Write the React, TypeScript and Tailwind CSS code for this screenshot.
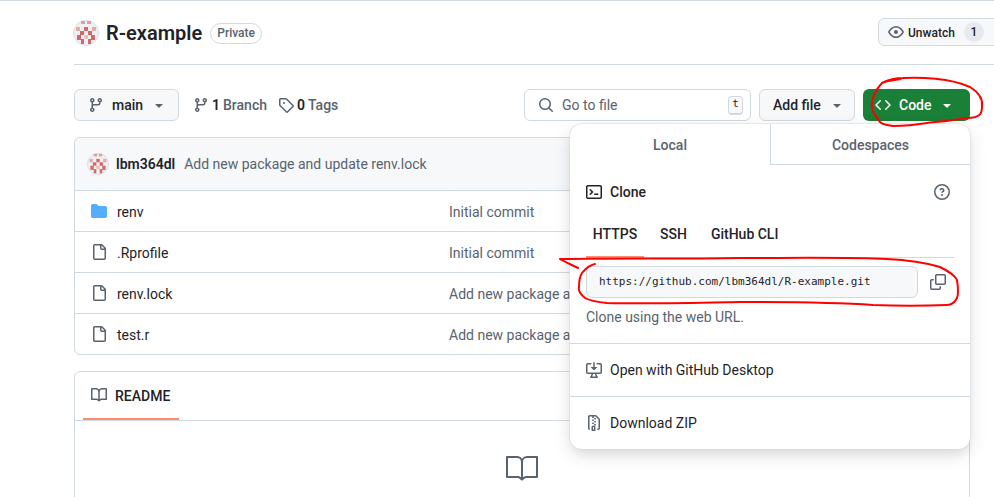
import React from 'react';
import { GoBook } from 'react-icons/go';

// 16px octicon paths
const icons: Record<string, string> = {
  book: 'M0 1.75A.75.75 0 0 1 .75 1h4.253c1.227 0 2.317.59 3 1.501A3.743 3.743 0 0 1 11.006 1h4.245a.75.75 0 0 1 .75.75v10.5a.75.75 0 0 1-.75.75h-4.507a2.25 2.25 0 0 0-1.591.659l-.622.621a.75.75 0 0 1-1.06 0l-.622-.621A2.25 2.25 0 0 0 5.258 13H.75a.75.75 0 0 1-.75-.75Zm7.251 10.324.004-5.073-.002-2.253A2.25 2.25 0 0 0 5.003 2.5H1.5v9h3.757a3.75 3.75 0 0 1 1.994.574ZM8.755 4.75l-.004 7.322a3.752 3.752 0 0 1 1.992-.572H14.5v-9h-3.495a2.25 2.25 0 0 0-2.25 2.25Z',
  code: 'm11.28 3.22 4.25 4.25a.75.75 0 0 1 0 1.06l-4.25 4.25a.749.749 0 0 1-1.275-.326.749.749 0 0 1 .215-.734L13.94 8l-3.72-3.72a.749.749 0 0 1 .326-1.275.749.749 0 0 1 .734.215Zm-6.56 0a.751.751 0 0 1 1.042.018.751.751 0 0 1 .018 1.042L2.06 8l3.72 3.72a.749.749 0 0 1-.326 1.275.749.749 0 0 1-.734-.215L.47 8.53a.75.75 0 0 1 0-1.06Z',
  copy: 'M0 6.75C0 5.784.784 5 1.75 5h1.5a.75.75 0 0 1 0 1.5h-1.5a.25.25 0 0 0-.25.25v7.5c0 .138.112.25.25.25h7.5a.25.25 0 0 0 .25-.25v-1.5a.75.75 0 0 1 1.5 0v1.5A1.75 1.75 0 0 1 9.25 16h-7.5A1.75 1.75 0 0 1 0 14.25ZM5 1.75C5 .784 5.784 0 6.75 0h7.5C15.216 0 16 .784 16 1.75v7.5A1.75 1.75 0 0 1 14.25 11h-7.5A1.75 1.75 0 0 1 5 9.25Zm1.75-.25a.25.25 0 0 0-.25.25v7.5c0 .138.112.25.25.25h7.5a.25.25 0 0 0 .25-.25v-7.5a.25.25 0 0 0-.25-.25Z',
  desktop: 'm4.927 5.427 2.896 2.896a.25.25 0 0 0 .354 0l2.896-2.896A.25.25 0 0 0 10.896 5H8.75V.75a.75.75 0 1 0-1.5 0V5H5.104a.25.25 0 0 0-.177.427ZM1.573 2.573a.25.25 0 0 0-.073.177v7.5a.25.25 0 0 0 .25.25h12.5a.25.25 0 0 0 .25-.25v-7.5a.25.25 0 0 0-.25-.25h-3a.75.75 0 0 1 0-1.5h3A1.75 1.75 0 0 1 16 2.75v7.5A1.75 1.75 0 0 1 14.25 12h-3.727c.099 1.041.52 1.872 1.292 2.757A.75.75 0 0 1 11.25 16h-6.5a.75.75 0 0 1-.565-1.243c.772-.885 1.192-1.716 1.292-2.757H1.75A1.75 1.75 0 0 1 0 10.25v-7.5A1.75 1.75 0 0 1 1.75 1h3a.75.75 0 0 1 0 1.5h-3a.25.25 0 0 0-.177.073ZM6.982 12a5.72 5.72 0 0 1-.765 2.5h3.566a5.72 5.72 0 0 1-.765-2.5H6.982Z',
  eye: 'M8 2c1.981 0 3.671.992 4.933 2.078 1.27 1.091 2.187 2.345 2.637 3.023a1.62 1.62 0 0 1 0 1.798c-.45.678-1.367 1.932-2.637 3.023C11.67 13.008 9.981 14 8 14c-1.981 0-3.671-.992-4.933-2.078C1.797 10.83.88 9.576.43 8.898a1.62 1.62 0 0 1 0-1.798c.45-.677 1.367-1.931 2.637-3.022C4.33 2.992 6.019 2 8 2ZM1.679 7.932a.12.12 0 0 0 0 .136c.411.622 1.241 1.75 2.366 2.717C5.176 11.758 6.527 12.5 8 12.5c1.473 0 2.825-.742 3.955-1.715 1.124-.967 1.954-2.096 2.366-2.717a.12.12 0 0 0 0-.136c-.412-.621-1.242-1.75-2.366-2.717C10.824 4.242 9.473 3.5 8 3.5c-1.473 0-2.825.742-3.955 1.715-1.124.967-1.954 2.096-2.366 2.717ZM8 10a2 2 0 1 1-.001-3.999A2 2 0 0 1 8 10Z',
  file: 'M2 1.75C2 .784 2.784 0 3.75 0h6.586c.464 0 .909.184 1.237.513l2.914 2.914c.329.328.513.773.513 1.237v9.586A1.75 1.75 0 0 1 13.25 16h-9.5A1.75 1.75 0 0 1 2 14.25Zm1.75-.25a.25.25 0 0 0-.25.25v12.5c0 .138.112.25.25.25h9.5a.25.25 0 0 0 .25-.25V6h-2.75A1.75 1.75 0 0 1 9 4.25V1.5Zm6.75.062V4.25c0 .138.112.25.25.25h2.688l-.011-.013-2.914-2.914-.013-.011Z',
  folder: 'M1.75 1A1.75 1.75 0 0 0 0 2.75v10.5C0 14.216.784 15 1.75 15h12.5A1.75 1.75 0 0 0 16 13.25v-8.5A1.75 1.75 0 0 0 14.25 3H7.5a.25.25 0 0 1-.2-.1l-.9-1.2C6.07 1.26 5.55 1 5 1H1.75Z',
  branch: 'M9.5 3.25a2.25 2.25 0 1 1 3 2.122V6A2.5 2.5 0 0 1 10 8.5H6a1 1 0 0 0-1 1v1.128a2.251 2.251 0 1 1-1.5 0V5.372a2.25 2.25 0 1 1 1.5 0v1.836A2.493 2.493 0 0 1 6 7h4a1 1 0 0 0 1-1v-.628A2.25 2.25 0 0 1 9.5 3.25Zm-6 0a.75.75 0 1 0 1.5 0 .75.75 0 0 0-1.5 0Zm8.25-.75a.75.75 0 1 0 0 1.5.75.75 0 0 0 0-1.5ZM4.25 12a.75.75 0 1 0 0 1.5.75.75 0 0 0 0-1.5Z',
  question: 'M0 8a8 8 0 1 1 16 0A8 8 0 0 1 0 8Zm8-6.5a6.5 6.5 0 1 0 0 13 6.5 6.5 0 0 0 0-13ZM6.92 6.085h.001a.749.749 0 1 1-1.342-.67c.169-.339.436-.701.849-.977C6.845 4.16 7.369 4 8 4a2.756 2.756 0 0 1 1.637.525c.503.377.863.965.863 1.725 0 .448-.115.83-.329 1.15-.205.307-.47.513-.692.662-.109.072-.22.138-.313.195l-.006.004a6.24 6.24 0 0 0-.26.16.952.952 0 0 0-.276.245.75.75 0 0 1-1.248-.832c.184-.264.42-.489.692-.661.103-.067.207-.132.313-.195l.007-.004c.1-.061.182-.11.258-.161a.969.969 0 0 0 .277-.245C8.96 6.514 9 6.427 9 6.25a.612.612 0 0 0-.262-.525A1.27 1.27 0 0 0 8 5.5c-.369 0-.595.09-.74.187a1.01 1.01 0 0 0-.34.398ZM9 11a1 1 0 1 1-2 0 1 1 0 0 1 2 0Z',
  search: 'M10.68 11.74a6 6 0 0 1-7.922-8.982 6 6 0 0 1 8.982 7.922l3.04 3.04a.749.749 0 0 1-.326 1.275.749.749 0 0 1-.734-.215ZM11.5 7a4.499 4.499 0 1 0-8.997 0A4.499 4.499 0 0 0 11.5 7Z',
  tag: 'M1 7.775V2.75C1 1.784 1.784 1 2.75 1h5.025c.464 0 .91.184 1.238.513l6.25 6.25a1.75 1.75 0 0 1 0 2.474l-5.026 5.026a1.75 1.75 0 0 1-2.474 0l-6.25-6.25A1.752 1.752 0 0 1 1 7.775Zm1.5 0c0 .066.026.13.073.177l6.25 6.25a.25.25 0 0 0 .354 0l5.025-5.025a.25.25 0 0 0 0-.354l-6.25-6.25a.25.25 0 0 0-.177-.073H2.75a.25.25 0 0 0-.25.25ZM6 5a1 1 0 1 1 0 2 1 1 0 0 1 0-2Z',
  terminal: 'M0 2.75C0 1.784.784 1 1.75 1h12.5c.966 0 1.75.784 1.75 1.75v10.5A1.75 1.75 0 0 1 14.25 15H1.75A1.75 1.75 0 0 1 0 13.25Zm1.75-.25a.25.25 0 0 0-.25.25v10.5c0 .138.112.25.25.25h12.5a.25.25 0 0 0 .25-.25V2.75a.25.25 0 0 0-.25-.25ZM7.25 8a.749.749 0 0 1-.22.53l-2.25 2.25a.749.749 0 0 1-1.275-.326.749.749 0 0 1 .215-.734L5.44 8 3.72 6.28a.749.749 0 0 1 .326-1.275.749.749 0 0 1 .734.215l2.25 2.25c.141.14.22.331.22.53Zm1.5 1.5h3a.75.75 0 0 1 0 1.5h-3a.75.75 0 0 1 0-1.5Z',
  caret: 'm4.427 7.427 3.396 3.396a.25.25 0 0 0 .354 0l3.396-3.396A.25.25 0 0 0 11.396 7H4.604a.25.25 0 0 0-.177.427Z',
  zip: 'M3.5 1.75v11.5c0 .09.048.173.126.217a.75.75 0 0 1-.752 1.298A1.748 1.748 0 0 1 2 13.25V1.75C2 .784 2.784 0 3.75 0h5.586c.464 0 .909.185 1.237.513l2.914 2.914c.329.328.513.773.513 1.237v8.586A1.75 1.75 0 0 1 12.25 15h-.5a.75.75 0 0 1 0-1.5h.5a.25.25 0 0 0 .25-.25V4.664a.25.25 0 0 0-.073-.177L9.513 1.573a.25.25 0 0 0-.177-.073H7.25a.75.75 0 0 1 0 1.5h-.5a.75.75 0 0 1 0-1.5h-3a.25.25 0 0 0-.25.25Zm3.75 8.75h.5c.966 0 1.75.784 1.75 1.75v3a.75.75 0 0 1-.75.75h-2.5a.75.75 0 0 1-.75-.75v-3c0-.966.784-1.75 1.75-1.75ZM6 5.25a.75.75 0 0 1 .75-.75h.5a.75.75 0 0 1 0 1.5h-.5A.75.75 0 0 1 6 5.25Zm.75 2.25h.5a.75.75 0 0 1 0 1.5h-.5a.75.75 0 0 1 0-1.5ZM8 6.75A.75.75 0 0 1 8.75 6h.5a.75.75 0 0 1 0 1.5h-.5A.75.75 0 0 1 8 6.75ZM8.75 3h.5a.75.75 0 0 1 0 1.5h-.5a.75.75 0 0 1 0-1.5ZM8 9.75A.75.75 0 0 1 8.75 9h.5a.75.75 0 0 1 0 1.5h-.5A.75.75 0 0 1 8 9.75Zm-1 2.5v2.25h1v-2.25a.25.25 0 0 0-.25-.25h-.5a.25.25 0 0 0-.25.25Z',
};

function Octicon({ name, size = 16, className }: { name: string; size?: number; className?: string }) {
  return (
    <svg width={size} height={size} viewBox="0 0 16 16" fill="currentColor" className={'shrink-0 ' + (className ?? '')}>
      <path d={icons[name]} />
    </svg>
  );
}

const files = [
  { name: 'renv', commit: 'Initial commit', icon: 'folder' },
  { name: '.Rprofile', commit: 'Initial commit', icon: 'file' },
  { name: 'renv.lock', commit: 'Add new package and update renv.lock', icon: 'file' },
  { name: 'test.r', commit: 'Add new package and update renv.lock', icon: 'file' },
];

function Avatar({ size }: { size: number }) {
  return (
    <svg width={size} height={size} viewBox="0 0 26 26" className="shrink-0">
      <circle cx="13" cy="13" r="12.5" fill="#f0f0f0" stroke="#d8dee4" strokeWidth="1" />
      <g fill="#cf6a6a">
        <rect x="3" y="7" width="4" height="4" opacity="0.5" />
        <rect x="19" y="7" width="4" height="4" opacity="0.5" />
        <rect x="8" y="1" width="4" height="3" opacity="0.6" />
        <rect x="14" y="1" width="4" height="3" opacity="0.6" />
        <rect x="11" y="7" width="4" height="4" />
        <rect x="7" y="11" width="4" height="4" />
        <rect x="15" y="11" width="4" height="4" />
        <rect x="4" y="15" width="4" height="5" />
        <rect x="18" y="15" width="4" height="5" />
        <rect x="8" y="19" width="3" height="5" />
        <rect x="15" y="19" width="3" height="5" />
        <rect x="11" y="15" width="4" height="4" opacity="0.35" />
      </g>
    </svg>
  );
}

export default function App() {
  return (
    <div
      className="relative w-[994px] h-[497px] overflow-hidden bg-white border-t border-[#d1d9e0] text-[#1f2328] text-[14px]"
      style={{ fontFamily: 'Roboto, "Noto Sans", sans-serif' }}
    >
      {/* Repo title */}
      <div className="ml-[74px] w-[960px] h-[64px] border-b border-[#d1d9e0] flex items-start justify-between pt-[17px] pr-[16px]">
        <div className="flex items-center h-[28px] mt-px -ml-px">
          <Avatar size={26} />
          <span className="ml-[7px] text-[20px] font-semibold leading-none">R-example</span>
          <span className="ml-[8px] h-[21px] px-[6px] flex items-center rounded-full border border-[#d1d9e0] text-[12px] font-medium text-[#59636e]">
            Private
          </span>
        </div>
        <div className="h-[28px] w-[140px] flex items-center pl-[9px] rounded-md border border-[#d1d9e0] bg-[#f6f8fa] text-[12px] font-medium">
          <Octicon name="eye" className="text-[#59636e]" />
          <span className="ml-[4px] pt-px">Unwatch</span>
          <span className="ml-[9px] w-[20px] h-[20px] rounded-full bg-[#e6eaef] flex items-center justify-center">1</span>
        </div>
      </div>

      {/* Toolbar */}
      <div className="ml-[74px] w-[896px] mt-[24px] h-[32px] flex items-center">
        <div className="w-[105px] h-[32px] flex items-center pl-[13px] rounded-md border border-[#d1d9e0] bg-[#f6f8fa] font-medium">
          <Octicon name="branch" className="text-[#59636e]" />
          <span className="ml-[8px]">main</span>
          <Octicon name="caret" className="ml-[8px] text-[#59636e]" />
        </div>
        <div className="ml-[14px] flex items-center">
          <Octicon name="branch" className="text-[#59636e]" />
          <span className="ml-[3px] font-semibold">1</span>
          <span className="ml-[3px] text-[#59636e] font-medium">Branch</span>
        </div>
        <div className="ml-[11px] flex items-center">
          <Octicon name="tag" className="text-[#59636e]" />
          <span className="ml-[3px] font-semibold">0</span>
          <span className="ml-[3px] text-[#59636e] font-medium">Tags</span>
        </div>
        <div className="ml-auto w-[227px] h-[32px] flex items-center pl-[13px] pr-[7px] rounded-md border border-[#d1d9e0] text-[#59636e]">
          <Octicon name="search" />
          <span className="ml-[8px]">Go to file</span>
          <span
            className="ml-auto w-[15px] h-[19px] flex items-center justify-center rounded-[4px] border border-[#d1d9e0] border-b-2 bg-[#f6f8fa] text-[11px] text-[#1f2328]"
            style={{ fontFamily: '"DejaVu Sans Mono", monospace' }}
          >
            t
          </span>
        </div>
        <div className="ml-[8px] w-[96px] h-[32px] flex items-center pl-[13px] rounded-md border border-[#d1d9e0] bg-[#f6f8fa] font-medium">
          <span>Add file</span>
          <Octicon name="caret" className="ml-[8px] text-[#59636e]" />
        </div>
        <div className="ml-[8px] w-[107px] h-[32px] flex items-center pl-[12px] rounded-md bg-[#1a7f37] text-white font-medium">
          <Octicon name="code" />
          <span className="ml-[8px]">Code</span>
          <Octicon name="caret" className="ml-[8px]" />
        </div>
      </div>

      {/* File table */}
      <div className="ml-[74px] w-[896px] mt-[16px] rounded-md border border-[#d1d9e0]">
        <div className="h-[52px] flex items-center pl-[12px] bg-[#f6f8fa] rounded-t-md">
          <Avatar size={22} />
          <span className="ml-[7px] pt-px font-semibold">lbm364dl</span>
          <span className="ml-[9px] pt-px text-[#59636e]">Add new package and update renv.lock</span>
        </div>
        {files.map((file) => (
          <div key={file.name} className="h-[41px] flex items-center border-t border-[#d1d9e0] pl-[16px]">
            <Octicon name={file.icon} className={file.icon === 'folder' ? 'text-[#54aeff]' : 'text-[#59636e]'} />
            <span className="ml-[10px] w-[332px] pt-[2px]">{file.name}</span>
            <span className="text-[#59636e] whitespace-nowrap pt-[2px]">{file.commit}</span>
          </div>
        ))}
      </div>

      {/* README */}
      <div className="ml-[74px] w-[896px] mt-[16px] h-[200px] rounded-md border border-[#d1d9e0]">
        <div className="h-[49px] border-b border-[#d1d9e0] pl-[8px] flex">
          <div className="w-[96px] h-[48px] flex items-center pl-[8px] border-b-2 border-[#fd8c73] font-medium">
            <Octicon name="book" className="text-[#59636e]" />
            <span className="ml-[8px] pt-[2px]">README</span>
          </div>
        </div>
        <div className="flex justify-center pt-[31px]">
          <GoBook size={32} className="text-[#59636e]" />
        </div>
      </div>

      {/* Code dropdown */}
      <div className="absolute left-[570px] top-[123px] w-[400px] h-[325px] rounded-xl bg-white shadow-[0_0_0_1px_#d1d9e080,0_6px_12px_-3px_#25292e18,0_6px_18px_#25292e1f]">
        <div className="flex h-[41px] font-medium text-[#59636e]">
          <div className="w-[200px] flex items-center justify-center pt-[2px]">Local</div>
          <div className="w-[200px] flex items-center justify-center pt-[2px] border-l border-b border-[#d1d9e0]">Codespaces</div>
        </div>
        <div className="px-[16px]">
          <div className="flex items-center h-[16px] mt-[19px]">
            <Octicon name="terminal" />
            <span className="ml-[8px] font-medium">Clone</span>
            <Octicon name="question" className="ml-auto mr-[4px] text-[#59636e]" />
          </div>
          <div className="mt-[11px] h-[47px] w-[368px] border-b border-[#d1d9e0] flex font-medium">
            <div className="w-[58px] h-[47px] pt-px border-b-2 border-[#fd8c73] flex items-center justify-center">HTTPS</div>
            <div className="ml-[16px] pt-px flex items-center">SSH</div>
            <div className="ml-[24px] pt-px flex items-center">GitHub CLI</div>
          </div>
          <div className="mt-[8px] flex items-center">
            <div
              className="w-[332px] h-[32px] pl-[12px] flex items-center rounded-md border border-[#d1d9e0] bg-[#f6f8fa] text-[11px]"
              style={{ fontFamily: '"DejaVu Sans Mono", monospace' }}
            >
              https://github.com/lbm364dl/R-example.git
            </div>
            <Octicon name="copy" className="ml-[12px] text-[#59636e]" />
          </div>
          <div className="mt-[9px] h-[20px] leading-[20px] text-[#59636e]">Clone using the web URL.</div>
        </div>
        <div className="mt-[16px] h-[53px] border-t border-[#d1d9e0] flex items-center pl-[16px]">
          <Octicon name="desktop" className="text-[#59636e]" />
          <span className="ml-[8px]">Open with GitHub Desktop</span>
        </div>
        <div className="h-[53px] border-t border-[#d1d9e0] flex items-center pl-[16px]">
          <Octicon name="zip" className="text-[#59636e]" />
          <span className="ml-[8px]">Download ZIP</span>
        </div>
      </div>

      {/* Red pen marks */}
      <svg className="absolute left-0 top-[-1px] pointer-events-none" width="994" height="497" fill="none" stroke="#f00" strokeWidth="2" strokeLinecap="round" strokeLinejoin="round">
        <path d="M882 83 C888 80 896 78 903 78 C920 77 950 78 970 87 C978 92 983 98 982 106 C982 113 981 118 967 118 C950 121 935 122 927 123 C915 125 905 126 893 126 C885 125 882 124 880 122 C875 116 872 112 872 107 C871 100 875 90 882 83 C886 81 894 80 901 79" />
        <path d="M560 259 C565 262 572 265 578 268 M560 259 C620 258 680 259 740 258 C790 258 850 257 887 259 C910 260 930 264 940 267 C948 271 955 275 957 280 C958 287 959 293 957 298 C955 302 951 305 947 305 C920 306 900 306 873 305 C830 302 785 302 740 302 C690 303 650 304 607 303 C597 302 590 301 585 298 C580 294 578 291 579 287 C579 280 580 276 582 273 C586 268 590 265 595 264" />
      </svg>
    </div>
  );
}
